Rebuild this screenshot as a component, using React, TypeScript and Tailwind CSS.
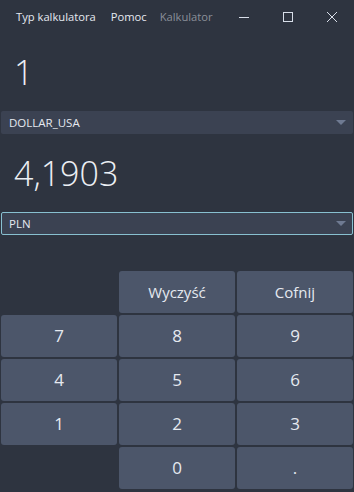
import React from 'react';

const FONT = { fontFamily: '"Open Sans", "Noto Sans", sans-serif' };

const Caret = () => (
  <svg width="10" height="6" viewBox="0 0 10 6" className="shrink-0">
    <path d="M0 0 H10 L5 5 Z" fill="#6f7a92" />
  </svg>
);

const Select = ({ value, active }: { value: string; active?: boolean }) => (
  <div
    className={`mx-[1px] h-[23px] flex items-center justify-between pl-[7px] pr-[6px] rounded-[2px] bg-[#3b4252] text-[11.5px] text-[#e5e9f0] ${
      active ? 'border border-[#88c0d0]' : 'border border-transparent'
    }`}
  >
    <span>{value}</span>
    <Caret />
  </div>
);

const Key = ({ label, small, empty }: { label?: string; small?: boolean; empty?: boolean }) =>
  empty ? (
    <div />
  ) : (
    <button
      className={`h-[42px] rounded-[3px] bg-[#4c566a] text-[#e5e9f0] flex items-center justify-center ${
        small ? 'text-[15px]' : 'text-[17px]'
      }`}
    >
      {label}
    </button>
  );

export default function App() {
  return (
    <div className="w-[354px] h-[492px] bg-[#2e3440] flex flex-col overflow-hidden select-none" style={FONT}>
      {/* title bar */}
      <div className="h-[34px] flex items-center text-[11.2px]">
        <span className="ml-[16px] text-[#e5e9f0]">Typ kalkulatora</span>
        <span className="ml-[15px] text-[#e5e9f0]">Pomoc</span>
        <span className="ml-[13px] text-[#8a8f99]">Kalkulator</span>
        <div className="ml-auto flex items-center">
          <svg width="10" height="10" viewBox="0 0 10 10" className="mr-[34px]">
            <path d="M0 5.5 H10" stroke="#d8dee9" strokeWidth="1" />
          </svg>
          <svg width="10" height="10" viewBox="0 0 10 10" className="mr-[34px]">
            <rect x="0.5" y="0.5" width="9" height="9" fill="none" stroke="#d8dee9" strokeWidth="1" />
          </svg>
          <svg width="10" height="10" viewBox="0 0 10 10" className="mr-[17px]">
            <path d="M0 0 L10 10 M10 0 L0 10" stroke="#d8dee9" strokeWidth="1" />
          </svg>
        </div>
      </div>

      {/* input value */}
      <div className="h-[77px] flex items-center pl-[14px] text-[34px] text-[#eceff4] font-light">1</div>
      <Select value="DOLLAR_USA" />

      {/* converted value */}
      <div className="h-[78px] flex items-center pl-[14px] text-[34px] text-[#eceff4] font-light">4,1903</div>
      <Select value="PLN" active />

      {/* keypad */}
      <div className="mt-auto mb-[3px] px-[1px] grid grid-cols-3 gap-[2px]">
        <Key empty />
        <Key label="Wyczyść" small />
        <Key label="Cofnij" small />
        <Key label="7" />
        <Key label="8" />
        <Key label="9" />
        <Key label="4" />
        <Key label="5" />
        <Key label="6" />
        <Key label="1" />
        <Key label="2" />
        <Key label="3" />
        <Key empty />
        <Key label="0" />
        <Key label="." />
      </div>
    </div>
  );
}
